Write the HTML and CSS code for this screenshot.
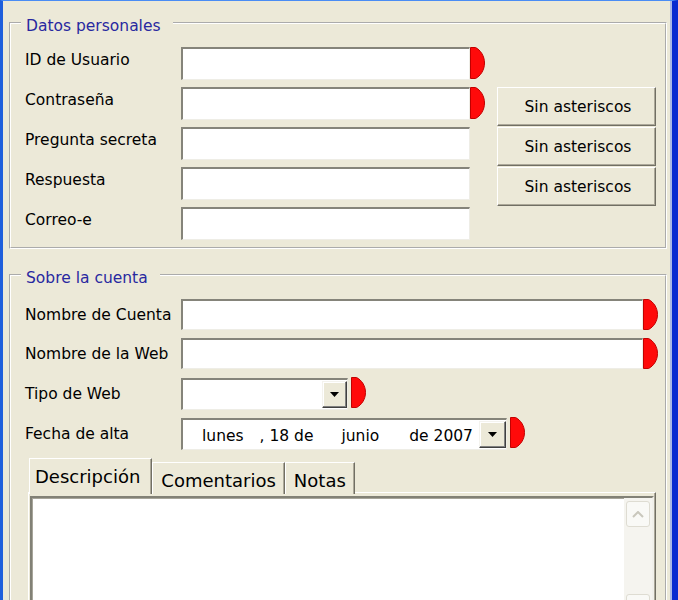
FILE: index.html
```html
<!DOCTYPE html>
<html lang="es">
<head>
<meta charset="utf-8">
<title>Datos de cuenta</title>
<link rel="stylesheet" href="styles.css">
</head>
<body>
<div class="window">
  <fieldset class="group g1">
    <legend>Datos personales</legend>
    <div class="grid1">
      <div class="lbl1 r1">ID de Usuario</div>
      <div class="field r1"></div>
      <svg class="req r1" viewBox="0 0 15 32" width="15" height="32"><path d="M0.5 0.5H5.5C10.5 3 14.5 9 14.5 16S10.5 29 5.5 31.5H0.5Z"/></svg>

      <div class="lbl1 r2">Contraseña</div>
      <div class="field r2"></div>
      <svg class="req r2" viewBox="0 0 15 32" width="15" height="32"><path d="M0.5 0.5H5.5C10.5 3 14.5 9 14.5 16S10.5 29 5.5 31.5H0.5Z"/></svg>
      <div class="btn r2">Sin asteriscos</div>

      <div class="lbl1 r3">Pregunta secreta</div>
      <div class="field r3"></div>
      <div class="btn r3">Sin asteriscos</div>

      <div class="lbl1 r4">Respuesta</div>
      <div class="field r4"></div>
      <div class="btn r4">Sin asteriscos</div>

      <div class="lbl1 r5">Correo-e</div>
      <div class="field r5"></div>
    </div>
  </fieldset>

  <fieldset class="group g2">
    <legend>Sobre la cuenta</legend>
    <div class="grid2">
      <div class="lbl2">Nombre de Cuenta</div>
      <div class="field f31"></div>
      <svg class="req req2" viewBox="0 0 15 32" width="15" height="31" preserveAspectRatio="none"><path d="M0.5 0.5H5.5C10.5 3 14.5 9 14.5 16S10.5 29 5.5 31.5H0.5Z"/></svg>

      <div class="lbl2">Nombre de la Web</div>
      <div class="field f31"></div>
      <svg class="req req2" viewBox="0 0 15 32" width="15" height="31" preserveAspectRatio="none"><path d="M0.5 0.5H5.5C10.5 3 14.5 9 14.5 16S10.5 29 5.5 31.5H0.5Z"/></svg>

      <div class="lbl2">Tipo de Web</div>
      <div class="combo-line">
        <div class="combo tipo">
          <div class="dd dd-tipo"><svg width="9" height="5" viewBox="0 0 9 5"><path d="M0 0H9L4.5 5Z"/></svg></div>
        </div>
        <svg class="req req3" viewBox="0 0 15 32" width="15" height="31" preserveAspectRatio="none"><path d="M0.5 0.5H5.5C10.5 3 14.5 9 14.5 16S10.5 29 5.5 31.5H0.5Z"/></svg>
      </div>

      <div class="lbl2">Fecha de alta</div>
      <div class="combo-line">
        <div class="combo fecha">
          <div class="dtext"><span>lunes</span><span class="s1">, 18 de</span><span class="s2">junio</span><span class="s3">de 2007</span></div>
          <div class="dd"><svg width="9" height="5" viewBox="0 0 9 5"><path d="M0 0H9L4.5 5Z"/></svg></div>
        </div>
        <svg class="req req3" viewBox="0 0 15 32" width="15" height="31" preserveAspectRatio="none"><path d="M0.5 0.5H5.5C10.5 3 14.5 9 14.5 16S10.5 29 5.5 31.5H0.5Z"/></svg>
      </div>
    </div>

    <div class="tabs">
      <div class="tab sel">Descripción</div>
      <div class="tab">Comentarios</div>
      <div class="tab">Notas</div>
    </div>
    <div class="panel">
      <div class="memo">
        <div class="memo-text"></div>
        <div class="vscroll">
          <div class="sbtn"><svg width="12" height="7" viewBox="0 0 12 7"><polyline points="1,6 6,1 11,6"/></svg></div>
          <div class="sbtn down"><svg width="12" height="7" viewBox="0 0 12 7"><polyline points="1,1 6,6 11,1"/></svg></div>
        </div>
      </div>
    </div>
  </fieldset>
</div>
</body>
</html>
```

FILE: styles.css
```css
* { box-sizing: border-box; }
html, body { margin: 0; padding: 0; }
body {
  font-family: "DejaVu Sans", Verdana, sans-serif;
  font-size: 15.5px;
  color: #000;
  background: #ece9d8;
}

.window {
  width: 678px;
  height: 600px;
  overflow: hidden;
  background: #ece9d8;
  border-top: 1px solid #4a8cf4;
  border-left: 3px solid #1f5fdc;
  border-right: 6px solid #0a2bd0;
  box-shadow: inset -2px 0 #aab8e6;
}

.group {
  margin: 10px 5px 0 6px;
  padding: 0;
  border: 2px groove #fff;
  min-inline-size: 0;
}
.g2 { margin-top: 14px; }

legend {
  margin-left: 10px;
  padding: 6px 12px 0 5px;
  line-height: 18px;
  color: #2828a0;
}

/* group 1 */
.grid1 {
  display: grid;
  grid-template-columns: 156px 289px 15px 12px 159px;
  grid-template-rows: repeat(5, 33px);
  row-gap: 7px;
  padding: 12px 0 7px 14px;
}
.r1 { grid-row: 1; }
.r2 { grid-row: 2; }
.r3 { grid-row: 3; }
.r4 { grid-row: 4; }
.r5 { grid-row: 5; }
.lbl1 {
  grid-column: 1;
  padding-top: 4px;
  line-height: 18px;
  white-space: nowrap;
}
.grid1 .field { grid-column: 2; }
.grid1 .req { grid-column: 3; }

.field {
  background: #fff;
  border-style: solid;
  border-width: 2px 1px 1px 2px;
  border-color: #85847a #eeede6 #eeede6 #85847a;
}

.req { display: block; }
.req path { fill: #ff0a0a; stroke: #c00000; stroke-width: 1; }

.btn {
  grid-column: 5;
  align-self: start;
  height: 39px;
  display: flex;
  align-items: center;
  justify-content: center;
  padding: 1px 0 0 3px;
  border: 1px solid;
  border-color: #fff #716f64 #716f64 #fff;
  box-shadow: inset -1px -1px #aca899;
  background: #ece9d8;
  white-space: nowrap;
}

/* group 2 */
.grid2 {
  display: grid;
  grid-template-columns: 156px 462px 15px;
  grid-template-rows: 31px 32px 32px 32px;
  row-gap: 8px;
  padding: 12px 0 0 14px;
}
.lbl2 {
  grid-column: 1;
  align-self: center;
  line-height: 18px;
  white-space: nowrap;
}
.grid2 .field { grid-column: 2; }
.f31 { height: 31px; align-self: start; }
.req2 { grid-column: 3; align-self: start; }

.combo-line {
  grid-column: 2 / 4;
  display: flex;
  align-items: flex-start;
  gap: 3px;
}
.combo {
  height: 32px;
  display: flex;
  align-items: center;
  background: #fff;
  border-style: solid;
  border-width: 2px 1px 1px 2px;
  border-color: #85847a #eeede6 #eeede6 #85847a;
}
.tipo { width: 167px; justify-content: flex-end; }
.fecha { width: 326px; }
.req3 { margin-top: -1px; }

.dtext {
  flex: 1;
  display: flex;
  padding: 3px 0 0 19px;
  line-height: 18px;
  white-space: nowrap;
}
.s1 { margin-left: 16px; }
.s2 { margin-left: 28px; }
.s3 { margin-left: 30px; }

.dd {
  width: 27px;
  height: 27px;
  display: flex;
  align-items: center;
  justify-content: center;
  border: 1px solid;
  border-color: #f4f3ee #404040 #404040 #f4f3ee;
  box-shadow: inset -1px -1px #808080, inset 1px 1px #fff;
  background: #ece9d8;
}
.dd-tipo { width: 25px; }
.dd svg { display: block; }
.dd path { fill: #000; }

/* tabs */
.tabs {
  display: flex;
  align-items: flex-end;
  height: 36px;
  margin: 8px 0 0 18px;
}
.tab {
  height: 32px;
  padding: 7px 8px 0;
  font-size: 18px;
  line-height: 21px;
  white-space: nowrap;
  background: #ece9d8;
  border-top: 1px solid #fff;
  border-left: 1px solid #fff;
  border-right: 1px solid #716f64;
  box-shadow: inset -1px 0 #aca899;
}
.tab.sel {
  height: 36px;
  position: relative;
  z-index: 1;
  padding: 7px 11px 0 5px;
}

.panel {
  width: 628px;
  height: 140px;
  margin: -2px 0 0 17px;
  padding: 2px 1px 0 1px;
  border-top: 1px solid #fff;
  border-left: 1px solid #fff;
  border-right: 1px solid #716f64;
  box-shadow: inset -1px 0 #aca899;
}
.memo {
  display: flex;
  height: 126px;
  margin-top: 1px;
  background: #fff;
  border-style: solid;
  border-width: 2px 2px 0 2px;
  border-color: #828176 #f1f0ea #f1f0ea #828176;
  box-shadow: inset 1px 1px #a7a59a;
}
.memo-text { flex: 1; }
.vscroll {
  width: 28px;
  display: flex;
  flex-direction: column;
  justify-content: space-between;
  padding: 3px 2px 2px 2px;
  background: #f5f4ef;
}
.sbtn {
  width: 24px;
  height: 26px;
  display: flex;
  align-items: center;
  justify-content: center;
  border: 1px solid #dedcd2;
  border-radius: 3px;
  background: #f9f9f6;
}
.sbtn svg { display: block; }
.sbtn polyline { fill: none; stroke: #c9c7bc; stroke-width: 2; }
```
